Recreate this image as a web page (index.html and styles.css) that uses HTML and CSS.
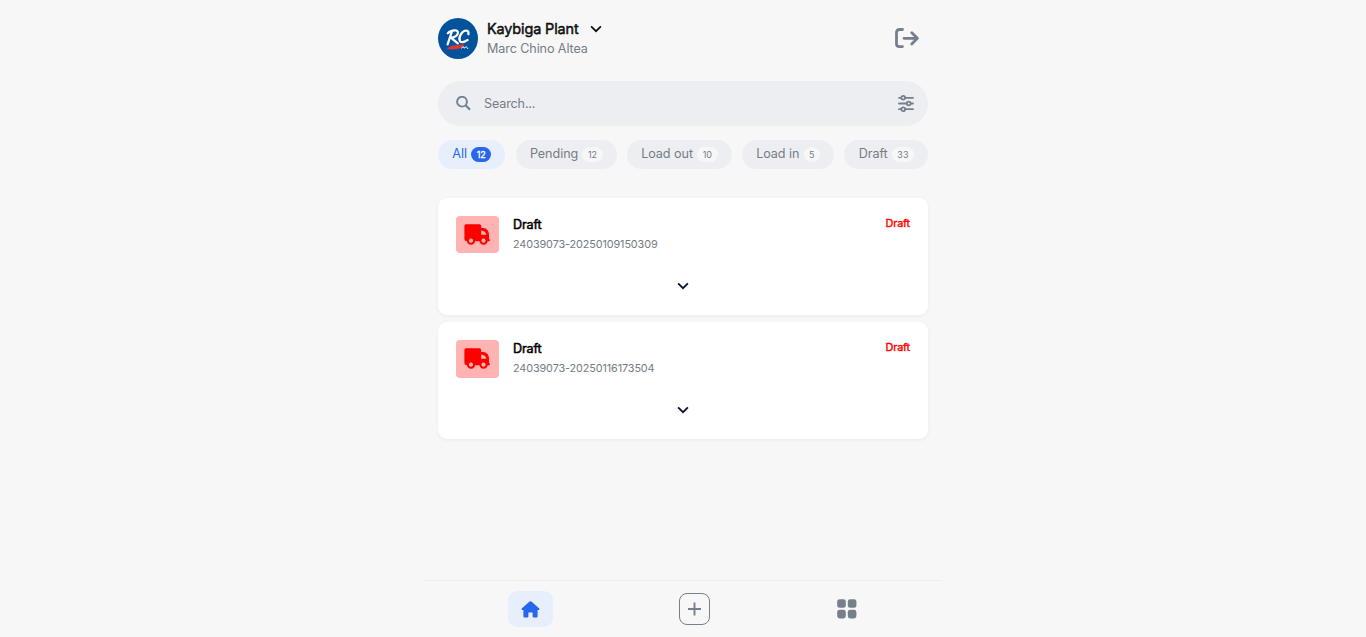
FILE: index.html
```html
<!DOCTYPE html>
<html lang="en">
<head>
<meta charset="utf-8">
<title>Kaybiga Plant</title>
<link rel="stylesheet" href="styles.css">
</head>
<body>
<svg class="defs" width="0" height="0">
  <symbol id="truck" viewBox="0 0 26 21">
    <path fill-rule="evenodd" d="M2 .3H15.5Q17.2 .3 17.2 2V4H19.2C22.8 4 25 7 25 11V15Q26 15.2 26 16.2Q26 17.3 25 17.3H23.6A4.1 4.1 0 0 1 15.5 17.3H11.1A4.1 4.1 0 0 1 3 17.3Q.4 17 .4 14.4V2Q.4 .3 2 .3ZM17.2 6.4V10.7H22.4Q21.4 6.7 17.2 6.4ZM7 14.6a2.1 2.1 0 1 0 .01 0ZM19.5 14.6a2.1 2.1 0 1 0 .01 0Z"/>
  </symbol>
  <symbol id="chevron" viewBox="0 0 12 8"><path d="M1.1 1.4 6 6.2 10.9 1.4" fill="none" stroke="currentColor" stroke-width="1.8"/></symbol>
</svg>
<div class="app">
  <header class="header">
    <svg class="avatar" viewBox="0 0 40 41">
      <ellipse cx="20" cy="20.5" rx="20" ry="20.5" fill="#02529c"/>
      <path d="M9 31Q12 26.8 20 27.4L26.5 25.4 24 29.2Q18 32.4 9 31Z" fill="#e8322b"/>
      <g fill="none" stroke="#fff" stroke-width="2.3" stroke-linecap="round" stroke-linejoin="round">
        <path d="M13.8 14 9.6 26.4M9.8 15.2Q13 12 17.6 12.4C21.6 12.8 20.6 19 13.2 19.8L19.8 25.4"/>
        <path d="M30.4 16.2Q31 12.4 27.8 12.6C23.2 13 20.2 20.6 22 23.2Q24.2 25.4 29.6 22"/>
      </g>
      <path d="M23 30.4 25.4 28.6 26 30.2 28.4 28.6 30 31" fill="none" stroke="#fff" stroke-width=".9"/>
    </svg>
    <div class="who">
      <div class="plant"><span>Kaybiga Plant</span><svg class="chev"><use href="#chevron"/></svg></div>
      <div class="user">Marc Chino Altea</div>
    </div>
    <svg class="logout" viewBox="0 0 24 20" fill="none" stroke="currentColor" stroke-width="2.8" stroke-linecap="round" stroke-linejoin="round"><path d="M7.5 1.5H4.5Q1.5 1.5 1.5 4.5V15.9Q1.5 18.6 4.5 18.6H7.5M9 10.3H22M16.8 4.7 22.4 10.3 16.8 15.9"/></svg>
  </header>

  <div class="search">
    <svg class="glass" viewBox="0 0 15 15" fill="none" stroke="currentColor" stroke-width="1.9"><circle cx="6" cy="5.7" r="4.9"/><path d="M9.6 9.3 14 13.7" stroke-width="2.2"/></svg>
    <span class="placeholder">Search...</span>
    <svg class="filter" viewBox="0 0 16 17" fill="none" stroke="currentColor" stroke-width="1.8" stroke-linecap="round"><path d="M1 2.8H3M7.4 2.8H15M1 8.5H8.3M13 8.5H15M1 14.2H3M7.4 14.2H15"/><circle cx="5.2" cy="2.8" r="1.9"/><circle cx="10.7" cy="8.5" r="1.9"/><circle cx="5.2" cy="14.2" r="1.9"/></svg>
  </div>

  <nav class="tabs">
    <div class="tab active">All<span class="count">12</span></div>
    <div class="tab">Pending<span class="count">12</span></div>
    <div class="tab">Load out<span class="count">10</span></div>
    <div class="tab">Load in<span class="count">5</span></div>
    <div class="tab">Draft<span class="count">33</span></div>
  </nav>

  <main class="list">
    <article class="card">
      <div class="row">
        <div class="thumb"><svg class="truck"><use href="#truck"/></svg></div>
        <div class="info"><div class="title">Draft</div><div class="ref">24039073-20250109150309</div></div>
        <div class="status">Draft</div>
      </div>
      <svg class="chev more"><use href="#chevron"/></svg>
    </article>
    <article class="card">
      <div class="row">
        <div class="thumb tall"><svg class="truck"><use href="#truck"/></svg></div>
        <div class="info"><div class="title">Draft</div><div class="ref">24039073-20250116173504</div></div>
        <div class="status">Draft</div>
      </div>
      <svg class="chev more"><use href="#chevron"/></svg>
    </article>
  </main>

  <footer class="bottom">
    <div class="home"><svg width="19" height="17" viewBox="0 0 19 17"><path fill="currentColor" d="M8.6 .6Q9.5-.1 10.4 .6L18.3 7.6Q18.9 9 17.5 9H16.6V15.4Q16.6 16.4 15.6 16.4H12.6Q11.6 16.4 11.6 15.4V11.6H7.4V15.4Q7.4 16.4 6.4 16.4H3.4Q2.4 16.4 2.4 15.4V9H1.5Q.1 9 .7 7.6Z"/></svg></div>
    <div class="add"><svg width="14" height="14" viewBox="0 0 14 14"><path d="M6.5 .5V13.5M0 7H13" stroke="currentColor" stroke-width="1.9"/></svg></div>
    <svg class="grid" width="20" height="20" viewBox="0 0 20 20" fill="currentColor"><rect x=".2" y=".2" width="8.6" height="8.6" rx="2.4"/><rect x="10.8" y=".2" width="8.6" height="8.6" rx="2.4"/><rect x=".2" y="10.8" width="8.6" height="8.6" rx="2.4"/><rect x="10.8" y="10.8" width="8.6" height="8.6" rx="2.4"/></svg>
  </footer>
</div>
</body>
</html>
```
FILE: styles.css
```css
* { box-sizing: border-box; }
body { margin: 0; background: #f7f7f7; font-family: Inter, sans-serif; color: #76808d; }
svg { display: block; flex: none; }
.defs { position: absolute; }
.app { width: 518px; height: 637px; margin: 0 auto; display: flex; flex-direction: column; }
.header { display: flex; align-items: flex-start; padding: 18px 23px 0 14px; height: 81px; }
.avatar { width: 40px; height: 41px; }
.who { margin-left: 9px; flex: 1; }
.plant { display: flex; align-items: center; gap: 11.5px; height: 22px; padding-bottom: 1px; font-size: 14.4px; letter-spacing: -.11px; color: #111; -webkit-text-stroke: .5px #111; }
.chev { width: 12px; height: 8px; color: #111; }
.plant .chev { margin-top: 1px; }
.user { font-size: 12.6px; line-height: 18px; letter-spacing: -.1px; color: #757c85; }
.logout { width: 24px; height: 20px; margin-top: 10px; }
.search { margin: 0 14px; height: 45px; border-radius: 23px; background: #edeef2; display: flex; align-items: center; padding: 0 14px 0 17px; }
.glass { width: 15px; height: 15px; margin-left: .5px; }
.placeholder { flex: 1; margin-left: 13.5px; font-size: 12.6px; letter-spacing: -.15px; color: #757c85; }
.filter { width: 16px; height: 17px; margin-bottom: 1px; }
.tabs { display: flex; justify-content: space-between; margin: 14px 14px 0; }
.tab { display: flex; align-items: center; gap: 4.2px; height: 29px; padding: 0 14px 2px 14.3px; border-radius: 15px; background: #edeef2; font-size: 12.6px; letter-spacing: -.05px; color: #757c85; }
.count { height: 15px; line-height: 15px; padding: 0 5.5px; border-radius: 8px; background: #f7f7f7; font-size: 9px; margin-top: 2px; letter-spacing: 0; }
.tab.active { background: #e7effd; color: #2867eb; }
.active .count { background: #2867eb; color: #fff; -webkit-text-stroke: .3px #fff; }
.list { margin: 29px 14px 0; display: flex; flex-direction: column; gap: 7px; flex: 1; }
.card { height: 117px; padding: 18px 18px 0; background: #fff; border-radius: 9px; box-shadow: 0 1px 4px rgba(0,0,0,.05); }
.row { display: flex; height: 66px; }
.thumb { width: 43px; height: 37px; border-radius: 4px; background: #ffb3b3; display: flex; align-items: flex-start; justify-content: center; padding: 8px 1px 0 0; fill: red; }
.tall { height: 38px; }
.truck { width: 26px; height: 21px; }
.info { flex: 1; margin-left: 14px; }
.title { font-size: 12.6px; line-height: 18px; letter-spacing: -.15px; color: #000; -webkit-text-stroke: .5px #000; }
.ref { font-size: 10.8px; line-height: 22px; letter-spacing: -.09px; color: #757c85; }
.status { font-size: 10.8px; line-height: 15px; letter-spacing: -.12px; color: red; -webkit-text-stroke: .4px red; }
.more { margin: 0 auto; color: #061432; }
.bottom { height: 57px; border-top: 1px solid #eee; display: flex; padding-left: 84px; }
.home { width: 45px; height: 36px; margin-top: 10px; border-radius: 9px; background: #e7effd; color: #2867eb; display: flex; align-items: center; justify-content: center; }
.add { width: 31px; height: 32px; margin: 12px 0 0 126px; border: 1px solid #76808d; border-radius: 8px; display: flex; align-items: center; justify-content: center; }
.grid { margin: 18px 0 0 127px; }
```
